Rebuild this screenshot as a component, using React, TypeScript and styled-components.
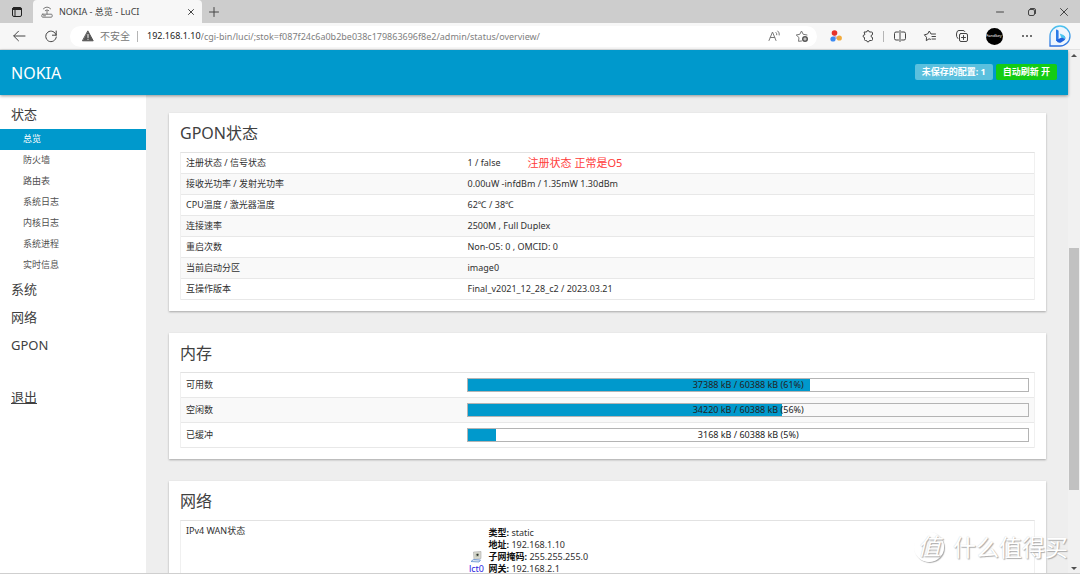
import React from "react";
import styled, { createGlobalStyle } from "styled-components";

const BLUE = "#0099cc";

const GlobalStyle = createGlobalStyle`
  *, *::before, *::after { box-sizing: border-box; }
  html, body { margin: 0; padding: 0; }
  body {
    font-family: "Noto Sans", "Noto Sans CJK SC", sans-serif;
    font-size: 9px;
    line-height: 12px;
    color: #303030;
    background: #fff;
  }
  button { font: inherit; color: inherit; border: 0; background: none; padding: 0; margin: 0; }
  svg { display: block; flex: none; }
`;

const Window = styled.div`
  display: flex;
  flex-direction: column;
  height: 100vh;
  overflow: hidden;
  border-bottom: 1px solid #cfcfcf;
`;

/* Browser chrome */
const TabStrip = styled.div`
  display: flex;
  flex: none;
  height: 23px;
  background: #cdcdcd;
`;

const StripButton = styled.button<{ $width: number }>`
  display: flex;
  align-items: center;
  justify-content: center;
  width: ${(p) => p.$width}px;
  height: 23px;
  color: #444;
`;

const Tab = styled.div`
  display: flex;
  align-items: center;
  gap: 6px;
  width: 169px;
  padding: 0 5px 0 8px;
  background: #f7f7f7;
  border-radius: 4px 4px 0 0;
`;

const TabTitle = styled.span`
  flex: 1;
  color: #404040;
  white-space: nowrap;
`;

const Spacer = styled.div`
  flex: 1;
`;

const Toolbar = styled.div`
  display: flex;
  flex: none;
  align-items: center;
  height: 27px;
  padding-right: 2px;
  background: #f7f7f7;
  border-bottom: 1px solid #e2e2e2;
`;

const ToolButton = styled.button<{ $width: number }>`
  display: flex;
  flex: none;
  align-items: center;
  justify-content: center;
  width: ${(p) => p.$width}px;
  height: 24px;
  color: #444;
`;

const AddressBar = styled.div`
  display: flex;
  flex: 1;
  align-items: center;
  height: 21px;
  margin-left: 6px;
  padding-left: 12px;
  background: #fff;
  border-radius: 11px;
  white-space: nowrap;
`;

const Insecure = styled.span`
  margin-left: 6px;
  padding-right: 7px;
  font-size: 10px;
  color: #777;
`;

const Divider = styled.span<{ $space: number }>`
  flex: none;
  width: 1px;
  height: 11px;
  margin: 0 ${(p) => p.$space}px;
  background: #b5b5b5;
`;

const Url = styled.label`
  display: flex;
  flex: 1;
  align-items: center;
  margin-left: 9px;
  color: #222;
`;

const UrlInput = styled.input`
  flex: 1;
  min-width: 0;
  height: 18px;
  padding: 0;
  border: 0;
  outline: 0;
  background: transparent;
  font: inherit;
  color: #808080;
`;

const Avatar = styled.span`
  display: flex;
  align-items: center;
  justify-content: center;
  width: 17px;
  height: 17px;
  border-radius: 50%;
  background: #000;
  color: #fff;
  font-size: 4px;
  line-height: 6px;
`;

/* Page */
const Viewport = styled.div`
  display: flex;
  flex: 1;
  min-height: 0;
`;

const Page = styled.div`
  display: flex;
  flex: 1;
  flex-direction: column;
  min-width: 0;
`;

const Header = styled.header`
  display: flex;
  position: relative;
  flex: none;
  align-items: center;
  gap: 3px;
  height: 45px;
  padding: 0 11px;
  background: ${BLUE};
  box-shadow: 0 1px 3px rgba(0, 0, 0, 0.4);
`;

const Brand = styled.a`
  flex: 1;
  font-size: 16px;
  line-height: 24px;
  color: #fff;
  text-decoration: none;
`;

const Badge = styled.a<{ $color: string }>`
  height: 16px;
  margin-bottom: 2px;
  padding: 2px 7px;
  border-radius: 2px;
  background: ${(p) => p.$color};
  color: #fff;
  font-weight: 700;
  text-decoration: none;
  white-space: nowrap;
`;

const Columns = styled.div`
  display: flex;
  flex: 1;
  min-height: 0;
  overflow: hidden;
`;

const Sidebar = styled.nav`
  flex: none;
  width: 146px;
  padding-top: 6px;
  background: #fff;
`;

const Section = styled.a<{ $logout?: boolean }>`
  display: block;
  height: 28px;
  margin-top: ${(p) => (p.$logout ? 24 : 0)}px;
  padding-left: 11px;
  font-size: 13px;
  line-height: 26px;
  color: #404040;
  text-decoration: ${(p) => (p.$logout ? "underline" : "none")};
`;

const SubList = styled.ul`
  margin: 0;
  padding: 0;
  list-style: none;
`;

const SubLink = styled.a<{ $active?: boolean }>`
  display: block;
  height: 21px;
  padding-left: 23px;
  line-height: 20px;
  text-decoration: none;
  color: ${(p) => (p.$active ? "#fff" : "#505050")};
  background: ${(p) => (p.$active ? BLUE : "transparent")};
`;

const Main = styled.main`
  flex: 1;
  min-width: 0;
  padding: 18px 22px 0 23px;
  background: #eee;
`;

const Card = styled.section`
  margin-bottom: 22px;
  padding: 0 11px 11px;
  background: #fff;
  box-shadow: 0 1px 2px rgba(0, 0, 0, 0.3);
`;

const CardTitle = styled.h2`
  margin: 0;
  height: 39px;
  font-size: 16px;
  font-weight: 400;
  line-height: 40px;
  color: #404040;
`;

const Table = styled.table`
  width: 100%;
  table-layout: fixed;
  border-spacing: 0;
  border: 1px solid #f0f0f0;
  border-top-color: #e2e2e2;
  border-bottom: 0;
`;

const Row = styled.tr<{ $height: number }>`
  height: ${(p) => p.$height}px;
  &:nth-child(even) { background: #f9f9f9; }
`;

const Label = styled.th`
  width: 33%;
  padding: 0 5px;
  border-bottom: 1px solid #e8e8e8;
  font-weight: 400;
  text-align: left;
`;

const TopLabel = styled(Label)`
  padding-top: 4px;
  vertical-align: top;
`;

const Value = styled.td`
  padding: 0 5px;
  border-bottom: 1px solid #e8e8e8;
`;

const TopValue = styled(Value)`
  vertical-align: top;
`;

const Noted = styled.div`
  display: flex;
  align-items: center;
  gap: 27px;
`;

const Note = styled.span`
  font-size: 11px;
  color: #ff3b3b;
`;

const Bar = styled.div`
  display: grid;
  height: 14px;
  border: 1px solid #b4b4b4;
`;

const BarFill = styled.div`
  grid-area: 1 / 1;
  background: ${BLUE};
`;

const BarText = styled.span`
  grid-area: 1 / 1;
  color: #222;
  text-align: center;
`;

const Wan = styled.div`
  display: flex;
  align-items: flex-start;
  gap: 3px;
  padding: 6px 0 12px;
`;

const WanPort = styled.a`
  display: flex;
  flex-direction: column;
  align-items: center;
  width: 18px;
  padding-top: 24px;
  color: #2a22e0;
`;

const WanList = styled.ul`
  margin: 0;
  padding: 0;
  list-style: none;
  b { color: #111; }
`;

/* Scrollbar of the page */
const ScrollTrack = styled.div`
  display: flex;
  flex: none;
  flex-direction: column;
  width: 12px;
  padding: 4px 1px 3px;
  background: #f1f1f1;
`;

const Thumb = styled.div`
  flex: 241;
  background: #c1c1c1;
`;

const TrackGap = styled.div<{ $grow: number }>`
  flex: ${(p) => p.$grow};
`;

const Arrow = styled.span<{ $down?: boolean }>`
  align-self: center;
  border: 3px solid transparent;
  border-top: ${(p) => (p.$down ? "3px solid #505050" : "0")};
  border-bottom: ${(p) => (p.$down ? "0" : "3px solid #505050")};
`;

const Watermark = styled.div`
  position: absolute;
  right: 12px;
  bottom: 11px;
  display: flex;
  align-items: center;
  gap: 9px;
  color: #fff;
  font-size: 23px;
  line-height: 32px;
  text-shadow: 1px 1px 1px #aaa, 0 0 1px #ccc;
  pointer-events: none;
`;

const Seal = styled.span`
  width: 30px;
  height: 30px;
  border: 1px solid #fff;
  border-radius: 50%;
  box-shadow: 1px 1px 1px #aaa;
  font-style: italic;
  line-height: 26px;
  text-align: center;
`;

type IconProps = { size?: number; children: React.ReactNode };
const Icon = ({ size = 14, children }: IconProps) => (
  <svg width={size} height={size} viewBox={`0 0 ${size} ${size}`} fill="none" stroke="currentColor"
    strokeWidth="1" strokeLinecap="round" strokeLinejoin="round" aria-hidden="true">
    {children}
  </svg>
);

const status: [string, string, string?][] = [
  ["注册状态 / 信号状态", "1 / false", "注册状态 正常是O5"],
  ["接收光功率 / 发射光功率", "0.00uW -infdBm / 1.35mW 1.30dBm"],
  ["CPU温度 / 激光器温度", "62℃ / 38℃"],
  ["连接速率", "2500M , Full Duplex"],
  ["重启次数", "Non-O5: 0 , OMCID: 0"],
  ["当前启动分区", "image0"],
  ["互操作版本", "Final_v2021_12_28_c2 / 2023.03.21"],
];

const memory: [string, string, number][] = [
  ["可用数", "37388 kB / 60388 kB", 61],
  ["空闲数", "34220 kB / 60388 kB", 56],
  ["已缓冲", "3168 kB / 60388 kB", 5],
];

const wan = [
  ["类型", "static"],
  ["地址", "192.168.1.10"],
  ["子网掩码", "255.255.255.0"],
  ["网关", "192.168.2.1"],
];

const pages = ["总览", "防火墙", "路由表", "系统日志", "内核日志", "系统进程", "实时信息"];

const Chrome = () => (
  <>
    <TabStrip>
      <StripButton $width={33} aria-label="标签页菜单">
        <Icon size={12}>
          <rect x="1.5" y="1.5" width="9" height="9" rx="1.5" stroke="#222" />
          <path d="M2 3h8" stroke="#222" strokeWidth="2" />
          <path d="M4 4v6" stroke="#222" />
        </Icon>
      </StripButton>
      <Tab>
        <Icon size={12}>
          <g stroke="#777">
            <rect x="0.8" y="8.2" width="10.4" height="3" rx="1" />
            <path d="M6 8V4.5M4.2 4.6Q6 2.8 7.8 4.6M2.4 2.8Q6-.8 9.6 2.8" />
            <path d="M2.5 9.8h2" />
          </g>
        </Icon>
        <TabTitle>NOKIA - 总览 - LuCI</TabTitle>
        <StripButton $width={12} aria-label="关闭标签页">
          <Icon size={8}><path d="M1.5 1.5l5 5M6.5 1.5l-5 5" /></Icon>
        </StripButton>
      </Tab>
      <StripButton $width={24} aria-label="新建标签页">
        <Icon size={12}><path d="M6 1.5v9M1.5 6h9" /></Icon>
      </StripButton>
      <Spacer />
      <StripButton $width={32} aria-label="最小化">
        <Icon size={8}><path d="M.5 4h7" /></Icon>
      </StripButton>
      <StripButton $width={32} aria-label="还原">
        <Icon size={10}>
          <rect x="1.5" y="2.5" width="6" height="6" rx="1.5" />
          <path d="M3.5 1.5h3.5q1.5 0 1.5 1.5v3.5" />
        </Icon>
      </StripButton>
      <StripButton $width={32} aria-label="关闭">
        <Icon size={10}><path d="M1.5 1.5l7 7M8.5 1.5l-7 7" /></Icon>
      </StripButton>
    </TabStrip>
    <Toolbar>
      <ToolButton $width={38} aria-label="后退">
        <Icon size={14}><path d="M13 7H2M6.5 2.2L1.7 7l4.8 4.8" /></Icon>
      </ToolButton>
      <ToolButton $width={26} aria-label="刷新">
        <Icon size={14}><path d="M12.2 6.2A5.3 5.3 0 1 0 12.3 8M12.2 2v4.2H8.4" /></Icon>
      </ToolButton>
      <AddressBar>
        <Icon size={12}>
          <path d="M6 1.2L11.2 10.8H.8z" fill="#555" stroke="#555" />
          <path d="M6 4.5v3M6 9.2v.2" stroke="#fff" />
        </Icon>
        <Insecure>不安全</Insecure>
        <Divider $space={0} />
        <Url>
          192.168.1.10
          <UrlInput
            aria-label="地址"
            defaultValue="/cgi-bin/luci/;stok=f087f24c6a0b2be038c179863696f8e2/admin/status/overview/"
          />
        </Url>
        <ToolButton $width={26} aria-label="朗读此页">
          <Icon size={14}>
            <g stroke="#777">
              <path d="M2 11.5L5.5 3 9 11.5M3.3 8.5h4.4" />
              <path d="M9 3.5q1 1 .8 2.3M10.8 2q2 1.7 1.5 4" />
            </g>
          </Icon>
        </ToolButton>
        <ToolButton $width={30} aria-label="添加到收藏夹">
          <Icon size={14}>
            <path d="M6.5 12L3.5 12.3 4 8.6 1.2 6 4.8 5.3 6.5 2 8.2 5.3 12 6" stroke="#777" />
            <circle cx="10" cy="10" r="3" fill="#555" stroke="none" />
            <path d="M10 8.7v2.6M8.7 10h2.6" stroke="#fff" strokeWidth=".8" />
          </Icon>
        </ToolButton>
      </AddressBar>
      <ToolButton $width={38} aria-label="扩展程序">
        <Icon size={14}>
          <g stroke="none">
            <path d="M5 5L4 10h6z" fill="#c9b6d6" />
            <circle cx="5.5" cy="4" r="2.8" fill="#e8332a" />
            <circle cx="4" cy="10" r="2.6" fill="#3d8bf2" />
            <circle cx="10.3" cy="9" r="2.6" fill="#f2ab3c" />
          </g>
        </Icon>
      </ToolButton>
      <ToolButton $width={26} aria-label="扩展">
        <Icon size={14}>
          <path d="M3.5 3H5.6a1.4 1.4 0 0 1 2.8 0H10.500q1 0 1 1v1.700a1.400 1.400 0 0 0 0 2.800V10.500q0 1-1 1H8.400a1.400 1.400 0 0 1-2.800 0H4.500q-1 0-1-1V8.500a1.400 1.400 0 0 1 0-2.800z" />
        </Icon>
      </ToolButton>
      <Divider $space={2} />
      <ToolButton $width={28} aria-label="分屏">
        <Icon size={14}>
          <path d="M5.5 3H3Q1.500 3 1.500 4.500v5Q1.500 11 3 11h2.500M8.500 3H11q1.500 0 1.500 1.500v5Q12.500 11 11 11H8.500M7 1.500v11" />
        </Icon>
      </ToolButton>
      <ToolButton $width={32} aria-label="收藏夹">
        <Icon size={14}>
          <path d="M7.5 10.3L6 9.800 3.300 11.700 3.500 8.300 1.300 5.800 4.600 5 6.300 2 8 5h4.500M9 7.500h3.500M9 10h3.500" />
        </Icon>
      </ToolButton>
      <ToolButton $width={31} aria-label="集锦">
        <Icon size={14}>
          <rect x="4.5" y="4.5" width="8" height="8" rx="1.5" />
          <path d="M8.500 6.500v4M6.500 8.500h4M2.800 9.500Q1 7.500 1.500 5L2 3Q2.300 1.500 4 1.500h4q1.300 0 1.800 1" />
        </Icon>
      </ToolButton>
      <ToolButton $width={34} aria-label="个人资料">
        <Avatar>Fandkey</Avatar>
      </ToolButton>
      <ToolButton $width={31} aria-label="设置及其他">
        <Icon size={14}>
          <g fill="currentColor" stroke="none">
            <circle cx="3" cy="7" r="1" /><circle cx="7" cy="7" r="1" /><circle cx="11" cy="7" r="1" />
          </g>
        </Icon>
      </ToolButton>
      <ToolButton $width={36} aria-label="必应">
        <svg width="22" height="22" viewBox="0 0 22 22" aria-hidden="true">
          <defs>
            <linearGradient id="bing" x1="0" y1="0" x2="0" y2="1">
              <stop offset="0" stopColor="#4cc3ee" />
              <stop offset="1" stopColor="#2b6fe0" />
            </linearGradient>
          </defs>
          <path d="M11 1a10 10 0 1 1 0 20H1V11A10 10 0 0 1 11 1z" fill="#eef6fe" stroke="url(#bing)" strokeWidth="1.3" />
          <path d="M7 4.500q1.300 0 2.600 1.200V15L7 16z" fill="#2a7be8" />
          <path d="M7 15.200l2.600-1.200 5.800-3q2 2 0 4.300l-3.400 2.200q-3 1-5-2.300z" fill="#1f62dc" />
          <path d="M10.700 8.500l3.800 1.600q2.200 1.200 1.600 4l-4-1.800z" fill="#4cc6f0" />
        </svg>
      </ToolButton>
    </Toolbar>
  </>
);

export default function App() {
  return (
    <Window>
      <GlobalStyle />
      <Chrome />
      <Viewport>
        <Page>
          <Header>
            <Brand href="#">NOKIA</Brand>
            <Badge href="#changes" $color="#5bc0de">未保存的配置: 1</Badge>
            <Badge href="#refresh" $color="#14cc14">自动刷新 开</Badge>
          </Header>
          <Columns>
            <Sidebar>
              <Section href="#status">状态</Section>
              <SubList>
                {pages.map((name, i) => (
                  <li key={name}><SubLink href={`#${name}`} $active={i === 0}>{name}</SubLink></li>
                ))}
              </SubList>
              <Section href="#system">系统</Section>
              <Section href="#network">网络</Section>
              <Section href="#gpon">GPON</Section>
              <Section href="#logout" $logout>退出</Section>
            </Sidebar>
            <Main>
              <Card>
                <CardTitle>GPON状态</CardTitle>
                <Table>
                  <tbody>
                    {status.map(([label, value, note]) => (
                      <Row key={label} $height={21}>
                        <Label scope="row">{label}</Label>
                        <Value>
                          {note ? <Noted>{value}<Note>{note}</Note></Noted> : value}
                        </Value>
                      </Row>
                    ))}
                  </tbody>
                </Table>
              </Card>
              <Card>
                <CardTitle>内存</CardTitle>
                <Table>
                  <tbody>
                    {memory.map(([label, text, percent]) => (
                      <Row key={label} $height={25}>
                        <Label scope="row">{label}</Label>
                        <Value>
                          <Bar role="progressbar" aria-label={label} aria-valuenow={percent}>
                            <BarFill style={{ width: `${percent}%` }} />
                            <BarText>{text} ({percent}%)</BarText>
                          </Bar>
                        </Value>
                      </Row>
                    ))}
                  </tbody>
                </Table>
              </Card>
              <Card>
                <CardTitle>网络</CardTitle>
                <Table>
                  <tbody>
                    <Row $height={88}>
                      <TopLabel scope="row">IPv4 WAN状态</TopLabel>
                      <TopValue>
                        <Wan>
                          <WanPort href="#lct0">
                            <svg width="12" height="12" viewBox="0 0 12 12" aria-hidden="true">
                              <path d="M3.5 1l7.5-.5v7L4 8.500z" fill="#d9d9d0" stroke="#aaa" strokeWidth=".6" />
                              <path d="M5.5 2.500l3.500-.3v3.600l-3.500.4z" fill="#bcc4b0" />
                              <circle cx="7.5" cy="3.8" r="1.1" fill="#333" />
                              <path d="M1 10.500l2.500-2 7 .5-1.500 2z" fill="#dfe6f2" stroke="#5f8fd0" strokeWidth=".8" />
                            </svg>
                            lct0
                          </WanPort>
                          <WanList>
                            {wan.map(([name, value]) => (
                              <li key={name}><b>{name}:</b> {value}</li>
                            ))}
                          </WanList>
                        </Wan>
                      </TopValue>
                    </Row>
                  </tbody>
                </Table>
              </Card>
            </Main>
          </Columns>
        </Page>
        <ScrollTrack aria-hidden="true">
          <Arrow />
          <TrackGap $grow={189} />
          <Thumb />
          <TrackGap $grow={76} />
          <Arrow $down />
        </ScrollTrack>
      </Viewport>
      <Watermark><Seal>值</Seal>什么值得买</Watermark>
    </Window>
  );
}
